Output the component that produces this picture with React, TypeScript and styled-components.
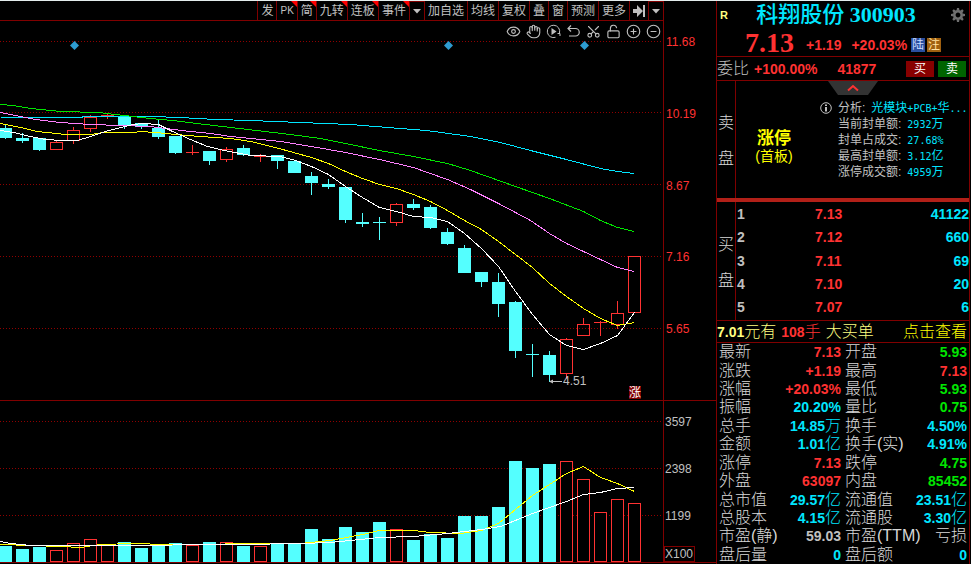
import React from "react";
import styled, { createGlobalStyle } from "styled-components";
import { Eye, Hand, Undo2, Scissors, LockOpen, CirclePlus, CircleMinus } from "lucide-react";

const C = {
  line: "#800000",
  red: "#ff3232",
  cyan: "#00e6ff",
  bar: "#54ffff",
  green: "#00e600",
  grey: "#c0c0c0",
  label: "#d8d8d8",
  pale: "#ffff80",
  yellow: "#ffff00",
};

const Global = createGlobalStyle`
  * { box-sizing: border-box; }
  body { margin: 0; background: #000; }
  button { font: inherit; color: inherit; background: none; border: 0; padding: 0; cursor: pointer; }
`;

const Page = styled.div`
  display: grid;
  grid-template-columns: minmax(0, 1fr) 255px;
  height: 100vh;
  min-height: 540px;
  overflow: hidden;
  background: #000;
  color: ${C.grey};
  border-top: 1px solid #e4ecec;
  font: 12px "Liberation Sans", "Noto Sans CJK SC", sans-serif;
`;

const ChartArea = styled.main`
  display: grid;
  grid-template-columns: minmax(0, 1fr) 53px;
  grid-template-rows: minmax(0, 400fr) minmax(0, 162fr);
  padding-bottom: 1px;
`;

const Pane = styled.section`
  display: flex;
  flex-direction: column;
  min-height: 0;
  border-bottom: 1px solid ${C.line};
`;

const Toolbar = styled.nav`
  display: flex;
  flex: none;
  justify-content: flex-end;
  height: 20px;
  border-bottom: 1px solid ${C.line};
`;

const Tool = styled.button<{ $hot?: boolean; $boxed?: boolean }>`
  position: relative;
  display: flex;
  align-items: center;
  padding: 0 3px;
  line-height: 18px;
  white-space: nowrap;
  border-left: 1px solid ${C.line};
  ${(p) => p.$boxed && `border-top: 1px solid ${C.line};`}
  ${(p) =>
    p.$hot &&
    `&::after {
      content: "";
      position: absolute;
      top: 0;
      right: 0;
      border-top: 6px solid #ff0000;
      border-left: 6px solid transparent;
    }`}
`;

const Latin = styled.span`
  font-size: 10px;
`;

const IconRow = styled.div`
  display: flex;
  flex: none;
  justify-content: flex-end;
  align-items: center;
  gap: 4px;
  height: 18px;
  padding: 2px 2px 0 0;
`;

const IconButton = styled.button`
  display: flex;
  align-items: center;
  justify-content: center;
  width: 16px;
  height: 16px;
`;

const Plot = styled.svg`
  display: block;
  flex: 1;
  width: 100%;
  min-height: 0;
`;

const Axis = styled.div<{ $tone: string }>`
  display: flex;
  flex-direction: column;
  min-height: 0;
  color: ${(p) => p.$tone};
  border-left: 1px solid ${C.line};
  border-bottom: 1px solid ${C.line};
`;

const PriceTick = styled.span`
  display: flex;
  flex: none;
  align-items: center;
  height: 18%;
  padding: 10px 0 0 2px;
`;

const VolumeTick = styled(PriceTick)`
  height: 29%;
  padding: 0 0 4px 1px;
`;

const Unit = styled.span`
  align-self: flex-start;
  margin-top: auto;
  padding-right: 1px;
  line-height: 14px;
  border: 1px solid ${C.line};
`;

const Side = styled.aside`
  display: flex;
  flex-direction: column;
  min-height: 0;
  margin-right: 1px;
  border: solid ${C.line};
  border-width: 0 1px;
`;

const Head = styled.header`
  flex: none;
  height: 56px;
  border-bottom: 1px solid ${C.line};
`;

const TitleRow = styled.div`
  display: flex;
  align-items: center;
  justify-content: space-between;
  height: 27px;
  padding: 0 3px;
`;

const Mark = styled.span`
  width: 14px;
  color: ${C.pale};
  font-size: 11px;
  font-weight: bold;
`;

const Title = styled.h1`
  margin: 0;
  padding-right: 12px;
  color: ${C.cyan};
  font: bold 22px/26px "Liberation Serif", "Noto Sans CJK SC", serif;
  white-space: nowrap;
`;

const StockName = styled.span`
  font-weight: 500;
`;

const QuoteRow = styled.div`
  display: flex;
  align-items: center;
  height: 28px;
  padding-left: 28px;
  padding-top: 6px;
`;

const Last = styled.strong`
  width: 61px;
  margin-top: -4px;
  color: ${C.red};
  font: bold 28px/28px "Liberation Serif", serif;
`;

const Bold = styled.b<{ $tone?: string }>`
  color: ${(p) => p.$tone || C.grey};
  font-size: 14px;
`;

const Change = styled(Bold)`
  margin-right: 10px;
`;

const Percent = styled(Bold)`
  margin-right: 4px;
`;

const Badge = styled.span<{ $bg: string; $ink: string }>`
  width: 14px;
  height: 14px;
  margin-right: 2px;
  background: ${(p) => p.$bg};
  color: ${(p) => p.$ink};
  line-height: 14px;
  text-align: center;
`;

const RatioRow = styled.div`
  display: flex;
  flex: none;
  align-items: center;
  height: 24px;
  padding-right: 3px;
  border-bottom: 1px solid ${C.line};
`;

const Big = styled.span`
  font-size: 16px;
  font-weight: 300;
  line-height: 18px;
  white-space: nowrap;
`;

const Ratio = styled(Bold)`
  margin: 0 20px 0 5px;
`;

const Trades = styled.span`
  display: flex;
  gap: 4px;
  margin-left: auto;
`;

const Trade = styled.button<{ $bg: string }>`
  width: 28px;
  height: 16px;
  background: ${(p) => p.$bg};
  color: #fff;
  line-height: 16px;
`;

const Book = styled.section`
  display: grid;
  grid-template-columns: 19px minmax(0, 1fr);
  flex: none;
`;

const SellBook = styled(Book)`
  height: 121px;
  border-bottom: 4px solid #b22018;
`;

const BuyBook = styled(Book)`
  height: 119px;
  border-bottom: 1px solid ${C.line};
`;

const SideLabel = styled.div`
  display: flex;
  flex-direction: column;
  justify-content: center;
  gap: 18px;
  padding: 3px 1px 0;
  color: ${C.label};
  border-right: 1px solid ${C.line};
`;

const SellBody = styled.div`
  display: flex;
  flex-direction: column;
`;

const Tab = styled.button`
  align-self: center;
  height: 15px;
  svg { display: block; }
`;

const SellContent = styled.div`
  display: grid;
  grid-template-columns: 84px minmax(0, 1fr);
  padding-top: 4px;
`;

const Limit = styled.div`
  display: flex;
  flex-direction: column;
  justify-content: center;
  align-items: center;
  padding: 14px 8px 0 0;
  color: ${C.yellow};
`;

const LimitName = styled.strong`
  font-size: 17px;
  line-height: 18px;
`;

const LimitNote = styled.span`
  font-size: 14px;
  line-height: 16px;
`;

const Facts = styled.dl`
  margin: 0;
`;

const Fact = styled.div`
  display: grid;
  grid-template-columns: 18px auto minmax(0, 1fr);
  align-items: center;
  height: 16px;
  line-height: 16px;
  white-space: nowrap;
  dt { grid-column: 2; padding-right: 6px; }
  dd { margin: 0; color: ${C.cyan}; }
  svg { display: block; }
`;

const Num = styled.span`
  font: 10px "DejaVu Sans Mono", monospace;
`;

const Depth = styled.table`
  display: flex;
  border-spacing: 0;
  tbody { display: flex; flex: 1; flex-direction: column; padding-bottom: 1px; }
  tr {
    display: grid;
    flex: 1;
    grid-template-columns: 78px 60px minmax(0, 1fr);
    align-items: center;
  }
  th, td { padding: 0 0 0 1px; text-align: left; font-size: 14px; font-weight: bold; }
  td:nth-child(2) { color: ${C.red}; }
  td:last-child { color: ${C.cyan}; text-align: right; }
`;

const Notice = styled.div`
  display: flex;
  flex: none;
  align-items: center;
  height: 22px;
  padding-right: 2px;
  color: ${C.pale};
  border-bottom: 1px solid ${C.line};
`;

const Lots = styled.span`
  display: flex;
  align-items: center;
  margin: 0 5px;
  color: ${C.red};
`;

const More = styled.a`
  margin-left: auto;
  color: ${C.yellow};
  font-size: 16px;
  font-weight: 300;
  line-height: 18px;
  text-decoration: none;
`;

const Stats = styled.table`
  display: flex;
  flex: 1;
  min-height: 0;
  border-spacing: 0;
  tbody { display: flex; flex: 1; flex-direction: column; }
  tr {
    display: grid;
    flex: 1;
    grid-template-columns: 66px minmax(0, 1fr) 70px minmax(0, 1fr);
    align-items: center;
    min-height: 0;
    padding: 0 2px;
  }
  th, td { height: 18px; padding: 0; font-weight: 300; line-height: 18px; white-space: nowrap; }
  th { color: ${C.label}; text-align: left; font-size: 16px; }
  th:nth-child(3) { padding-left: 4px; }
`;

const Value = styled.td<{ $tone: string }>`
  display: flex;
  align-items: center;
  justify-content: flex-end;
  color: ${(p) => p.$tone};
  b { font-size: 14px; font-weight: 700; }
  span { font-size: 16px; }
`;

type Candle = [up: 0 | 1, top: number, bottom: number, high: number, low: number];

const candles: Candle[] = [
  [0, 128, 138, 125, 139], [0, 138, 141, 133, 143], [0, 138, 150, 138, 151], [1, 142, 150, 141, 150],
  [1, 130, 141, 127, 144], [1, 117, 129, 115, 132], [1, 115, 116, 114, 119], [0, 116, 126, 116, 129],
  [0, 123, 127, 123, 129], [0, 128, 137, 120, 139], [0, 136, 153, 136, 154], [1, 152, 153, 145, 155],
  [0, 151, 161, 151, 165], [1, 149, 160, 147, 162], [0, 148, 155, 145, 156], [1, 156, 157, 154, 162],
  [0, 155, 161, 155, 169], [0, 161, 173, 160, 173], [0, 176, 183, 172, 195], [0, 184, 187, 179, 189],
  [0, 187, 220, 186, 223], [0, 222, 224, 213, 227], [0, 222, 223, 217, 240], [1, 204, 223, 203, 226],
  [0, 204, 208, 199, 210], [0, 207, 228, 205, 229], [0, 232, 244, 228, 245], [0, 248, 273, 245, 273],
  [0, 272, 282, 272, 287], [0, 282, 304, 273, 317], [0, 302, 351, 301, 358], [0, 354, 355, 344, 377],
  [0, 355, 375, 351, 382], [1, 339, 374, 338, 379], [1, 324, 336, 318, 336], [1, 322, 323, 321, 336],
  [1, 313, 325, 301, 329], [1, 256, 313, 256, 313],
];

const volumes = [
  546, 549, 547, 550, 543, 539, 545, 542, 548, 545, 543, 545, 542, 542, 546, 546, 544, 543, 529, 539,
  527, 532, 522, 529, 540, 534, 538, 516, 516, 507, 461, 468, 464, 461, 479, 512, 499, 503,
];

const averages = [
  { tone: "#00e6ff", points: "0,117 80,117 84,116 150,116 180,117 215,119 250,120 300,122 350,124 400,128 426,130 470,136 500,142 530,150 566,159 600,168 617,171 634,173" },
  { tone: "#00e600", points: "0,104 12,105 30,108 60,111 98,112 115,114 150,118 172,120 205,124 256,130 290,134 320,138 345,143 379,150 413,156 447,163 470,170 515,186 549,198 583,211 600,220 617,227 634,231" },
  { tone: "#ff80ff", points: "0,112 20,116 35,119 60,122 90,124 120,125 150,126 165,128 190,131 210,133 230,136 280,141 311,146 345,152 379,159 413,167 447,179 470,189 498,203 515,212 530,220 549,233 566,243 583,251 600,259 617,267 634,271" },
  { tone: "#ffff00", points: "0,123 20,127 37,131 65,134 90,134 103,132 133,132 140,131 155,132 175,134 200,136 230,138 250,141 275,147 311,157 328,163 345,171 362,178 379,184 396,188 413,194 430,201 447,210 464,220 481,229 498,241 515,254 532,267 549,283 566,296 583,308 600,318 617,325 634,322" },
  { tone: "#ffffff", points: "0,130 13,132 30,136 45,139 62,140 77,140 90,136 105,131 120,127 133,124 143,123 158,124 172,131 190,139 207,146 224,150 250,155 280,156 295,160 311,166 328,174 345,186 362,197 379,207 396,211 413,216 430,217 447,221 464,233 481,248 498,266 515,291 532,314 549,334 566,345 583,349 600,343 617,335 634,312" },
];

const volumeAverages = [
  { tone: "#ffff00", points: "0,544 30,545 60,546 80,547 100,544 133,543 165,544 215,544 235,543 300,543 320,541 330,540 362,534 379,530 413,530 430,532 460,533 481,530 498,523 515,509 532,495 549,484 566,473 583,466 600,477 617,483 634,491" },
  { tone: "#ffffff", points: "0,541 10,543 30,545 130,545 215,544 240,544 300,543 330,542 379,537 413,536 447,533 481,529 500,526 532,513 566,501 583,494 600,492 617,488 634,487" },
];

const Grid = ({ rows }: { rows: number[] }) => (
  <g stroke="#900000" strokeDasharray="1 2">
    {rows.map((y) => (
      <line key={y} x1="0" x2="663" y1={y + 0.5} y2={y + 0.5} />
    ))}
  </g>
);

const Lines = ({ items }: { items: { tone: string; points: string }[] }) => (
  <g fill="none" transform="translate(.5 .5)">
    {items.map((a) => (
      <polyline key={a.tone} points={a.points} stroke={a.tone} />
    ))}
  </g>
);

const PriceChart = () => (
  <Plot viewBox="0 39 663 361" role="img" aria-label="日K线" shapeRendering="crispEdges">
    <Grid rows={[41, 112, 184, 256, 328]} />
    {candles.map(([up, top, bottom, high, low], i) => {
      const x = 5 + 17 * i;
      const tone = up ? C.red : C.bar;
      return (
        <g key={i} fill={tone}>
          <rect x={x} y={high} width="1" height={Math.max(top - high, 0)} />
          <rect x={x} y={bottom} width="1" height={Math.max(low - bottom, 0)} />
          {up && bottom - top > 1 ? (
            <rect x={x - 5.5} y={top + 0.5} width="12" height={bottom - top - 1} fill="none" stroke={tone} />
          ) : (
            <rect x={x - 6} y={top} width="13" height={bottom - top} />
          )}
        </g>
      );
    })}
    <Lines items={averages} />
    {[74, 448, 584].map((x) => (
      <path key={x} d={`M${x + 0.5} 41l4.5 4.5-4.5 4.5-4.5-4.5z`} fill="#2e9bd0" shapeRendering="auto" />
    ))}
    <path d="M550 381h12v1h-12zM549 381.500l4-2v4z" fill={C.grey} shapeRendering="auto" />
    <text x="563" y="385" fill={C.grey} fontSize="12">4.51</text>
    <rect x="629" y="386" width="12" height="13" fill="#800000" />
    <text x="629" y="397" fill="#fff" fontSize="12">涨</text>
  </Plot>
);

const VolumeChart = () => (
  <Plot viewBox="0 401 663 161" role="img" aria-label="成交量" shapeRendering="crispEdges">
    <Grid rows={[421, 468, 515]} />
    {volumes.map((y, i) =>
      candles[i][0] ? (
        <rect key={i} x={17 * i - 0.5} y={y + 0.5} width="12" height={561 - y} fill="#000" stroke={C.red} />
      ) : (
        <rect key={i} x={17 * i - 1} y={y} width="13" height={562 - y} fill={C.bar} />
      )
    )}
    <Lines items={volumeAverages} />
  </Plot>
);

const Caret = () => (
  <svg width="8" height="5" viewBox="0 0 8 5"><path d="M0 0h8L4 4.500z" fill={C.grey} /></svg>
);

const Gear = () => (
  <svg width="14" height="14" viewBox="-7 -7 14 14" aria-hidden="true">
    <circle r="3.700" fill="none" stroke="#707070" strokeWidth="2.600" />
    {[0, 45, 90, 135, 180, 225, 270, 315].map((a) => (
      <path key={a} d="M-1.500-4.500L-1-7h2l.5 2.500z" transform={`rotate(${a})`} fill="#707070" />
    ))}
  </svg>
);

const tools: { name: string; hot?: boolean; boxed?: boolean; label?: React.ReactNode }[] = [
  { name: "发" },
  { name: "PK", hot: true, label: <Latin>PK</Latin> },
  { name: "简", hot: true },
  { name: "九转", hot: true },
  { name: "连板", hot: true },
  { name: "事件", hot: true },
  { name: "更多事件", boxed: true, label: <Caret /> },
  { name: "加自选" },
  { name: "均线" },
  { name: "复权" },
  { name: "叠" },
  { name: "窗" },
  { name: "预测" },
  { name: "更多" },
  {
    name: "收起",
    label: (
      <svg width="12" height="12" viewBox="0 0 12 12"><path d="M0 4h4V0l6 6-6 6V8H0zM10 0h2v12h-2z" fill={C.grey} /></svg>
    ),
  },
  { name: "展开", boxed: true, label: <Caret /> },
];

const iconProps = { size: 15, strokeWidth: 1.8, color: C.grey };
const chartTools: [string, React.ReactNode][] = [
  ["显示", <Eye {...iconProps} />],
  ["拖动", <Hand {...iconProps} />],
  ["回放", (
    <svg width="15" height="15" viewBox="0 0 15 15" fill="none" stroke={C.grey}>
      <path d="M9.500 13.300A6.200 6.200 0 1 1 13.500 9" />
      <path d="M11.500 9.500h2.500V12" />
      <path d="M5.500 4v7l5-3.500z" fill={C.grey} stroke="none" />
    </svg>
  )],
  ["撤销", (
    <svg width="15" height="15" viewBox="0 0 15 15" fill="none" stroke={C.grey} strokeWidth="1.200">
      <path d="M5 1.500L2 4.500l3 3M2 4.500h7.500a3.700 3.700 0 0 1 0 7.500H3" />
    </svg>
  )],
  ["剪切", <Scissors {...iconProps} style={{ transform: "rotate(-90deg)" }} />],
  ["解锁", <LockOpen {...iconProps} />],
  ["放大", <CirclePlus {...iconProps} />],
  ["缩小", <CircleMinus {...iconProps} />],
];

const facts: [string, React.ReactNode][] = [
  ["分析:", <>光模块<Num>+PCB+</Num>华<Num>...</Num></>],
  ["当前封单额:", <><Num>2932</Num>万</>],
  ["封单占成交:", <Num>27.68%</Num>],
  ["最高封单额:", <><Num>3.12</Num>亿</>],
  ["涨停成交额:", <><Num>4959</Num>万</>],
];

const bids = [["7.13", "41122"], ["7.12", "660"], ["7.11", "69"], ["7.10", "20"], ["7.07", "6"]];

type Stat = [label: string, number: string, unit: string, tone: string];
const stats: [Stat, Stat][] = [
  [["最新", "7.13", "", C.red], ["开盘", "5.93", "", C.green]],
  [["涨跌", "+1.19", "", C.red], ["最高", "7.13", "", C.red]],
  [["涨幅", "+20.03%", "", C.red], ["最低", "5.93", "", C.green]],
  [["振幅", "20.20%", "", C.cyan], ["量比", "0.75", "", C.green]],
  [["总手", "14.85", "万", C.cyan], ["换手", "4.50%", "", C.cyan]],
  [["金额", "1.01", "亿", C.cyan], ["换手(实)", "4.91%", "", C.cyan]],
  [["涨停", "7.13", "", C.red], ["跌停", "4.75", "", C.green]],
  [["外盘", "63097", "", C.red], ["内盘", "85452", "", C.green]],
  [["总市值", "29.57", "亿", C.cyan], ["流通值", "23.51", "亿", C.cyan]],
  [["总股本", "4.15", "亿", C.cyan], ["流通股", "3.30", "亿", C.cyan]],
  [["市盈(静)", "59.03", "", C.grey], ["市盈(TTM)", "", "亏损", C.label]],
  [["盘后量", "0", "", C.cyan], ["盘后额", "0", "", C.cyan]],
];

const StatCells = ({ stat: [label, number, unit, tone] }: { stat: Stat }) => (
  <>
    <th scope="row">{label}</th>
    <Value $tone={tone}>
      {number && <b>{number}</b>}
      {unit && <span>{unit}</span>}
    </Value>
  </>
);

export default function App() {
  return (
    <>
      <Global />
      <Page>
        <ChartArea>
          <Pane>
            <Toolbar>
              {tools.map((t) => (
                <Tool key={t.name} $hot={t.hot} $boxed={t.boxed} aria-label={t.name}>
                  {t.label || t.name}
                </Tool>
              ))}
            </Toolbar>
            <IconRow>
              {chartTools.map(([name, icon]) => (
                <IconButton key={name} aria-label={name}>{icon}</IconButton>
              ))}
            </IconRow>
            <PriceChart />
          </Pane>
          <Axis $tone={C.red}>
            {["11.68", "10.19", "8.67", "7.16", "5.65"].map((p) => (
              <PriceTick key={p}>{p}</PriceTick>
            ))}
          </Axis>
          <Pane>
            <VolumeChart />
          </Pane>
          <Axis $tone={C.grey}>
            {["3597", "2398", "1199"].map((v) => (
              <VolumeTick key={v}>{v}</VolumeTick>
            ))}
            <Unit>X100</Unit>
          </Axis>
        </ChartArea>

        <Side>
          <Head>
            <TitleRow>
              <Mark>R</Mark>
              <Title><StockName>科翔股份</StockName> 300903</Title>
              <IconButton aria-label="设置"><Gear /></IconButton>
            </TitleRow>
            <QuoteRow>
              <Last>7.13</Last>
              <Change $tone={C.red}>+1.19</Change>
              <Percent $tone={C.red}>+20.03%</Percent>
              <Badge $bg="#2a4fa0" $ink="#c8dcff">陆</Badge>
              <Badge $bg="#a06010" $ink="#ffe0a0">注</Badge>
            </QuoteRow>
          </Head>
          <RatioRow>
            <Big>委比</Big>
            <Ratio $tone={C.red}>+100.00%</Ratio>
            <Bold $tone={C.red}>41877</Bold>
            <Trades>
              <Trade $bg="#880000">买</Trade>
              <Trade $bg="#006400">卖</Trade>
            </Trades>
          </RatioRow>
          <SellBook>
            <SideLabel><Big>卖</Big><Big>盘</Big></SideLabel>
            <SellBody>
              <Tab aria-label="收起">
                <svg width="50" height="15" viewBox="0 0 50 15">
                  <path d="M0 0h50L40 14H10z" fill="#333" />
                  <path d="M20 9.500l5-4.500 5 4.500" fill="none" stroke={C.red} strokeWidth="2" />
                </svg>
              </Tab>
              <SellContent>
                <Limit><LimitName>涨停</LimitName><LimitNote>(首板)</LimitNote></Limit>
                <Facts>
                  {facts.map(([label, value], i) => (
                    <Fact key={label}>
                      {i === 0 && (
                        <svg width="12" height="12" viewBox="0 0 12 12" aria-hidden="true">
                          <circle cx="6" cy="6" r="5.300" fill="none" stroke={C.grey} />
                          <path d="M5 2.500h2v1.500H5zM5 5h2v4.500H5z" fill={C.grey} />
                        </svg>
                      )}
                      <dt>{label}</dt>
                      <dd>{value}</dd>
                    </Fact>
                  ))}
                </Facts>
              </SellContent>
            </SellBody>
          </SellBook>
          <BuyBook>
            <SideLabel><Big>买</Big><Big>盘</Big></SideLabel>
            <Depth>
              <tbody>
                {bids.map(([price, volume], i) => (
                  <tr key={price}>
                    <th scope="row">{i + 1}</th>
                    <td>{price}</td>
                    <td>{volume}</td>
                  </tr>
                ))}
              </tbody>
            </Depth>
          </BuyBook>
          <Notice>
            <Bold $tone={C.pale}>7.01</Bold>
            <Big>元有</Big>
            <Lots><Bold $tone={C.red}>108</Bold><Big>手</Big></Lots>
            <Big>大买单</Big>
            <More href="#orders">点击查看</More>
          </Notice>
          <Stats>
            <tbody>
              {stats.map(([a, b]) => (
                <tr key={a[0]}>
                  <StatCells stat={a} />
                  <StatCells stat={b} />
                </tr>
              ))}
            </tbody>
          </Stats>
        </Side>
      </Page>
    </>
  );
}
